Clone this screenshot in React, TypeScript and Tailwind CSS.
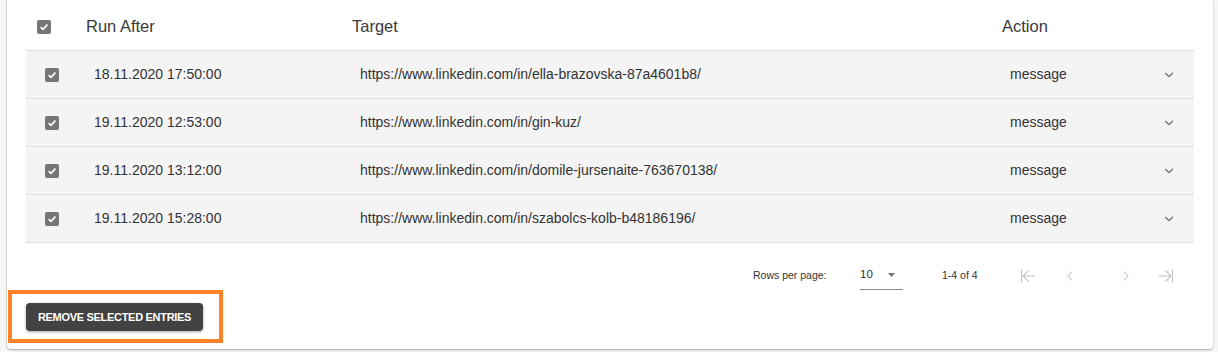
import React from "react";

const rows = [
  { date: "18.11.2020 17:50:00", url: "https://www.linkedin.com/in/ella-brazovska-87a4601b8/" },
  { date: "19.11.2020 12:53:00", url: "https://www.linkedin.com/in/gin-kuz/" },
  { date: "19.11.2020 13:12:00", url: "https://www.linkedin.com/in/domile-jursenaite-763670138/" },
  { date: "19.11.2020 15:28:00", url: "https://www.linkedin.com/in/szabolcs-kolb-b48186196/" },
];

function Check() {
  return (
    <span className="flex h-[14px] w-[14px] items-center justify-center rounded-[2px] bg-[#757575]">
      <svg width="10" height="10" viewBox="0 0 10 10">
        <path d="M1.6 5.2 L4 7.4 L8.4 2.6" fill="none" stroke="#fff" strokeWidth="1.6" />
      </svg>
    </span>
  );
}

function Chevron() {
  return (
    <svg width="10" height="6" viewBox="0 0 10 6">
      <path d="M1 1 L5 4.6 L9 1" fill="none" stroke="#757575" strokeWidth="1.3" />
    </svg>
  );
}

export default function App() {
  return (
    <div className="h-[352px] w-[1218px] bg-[#f5f5f5] font-['Liberation_Sans',Arial,sans-serif]">
      <div className="ml-[7px] h-[349px] w-[1206px] rounded-b-[4px] bg-white shadow-[0_1px_2px_rgba(0,0,0,0.3),-1px_0_1px_rgba(0,0,0,0.06)]">
        <div className="px-[19px]">
          {/* header */}
          <div className="flex h-[51px] items-center border-b border-[#e0e0e0] pt-[3px] text-[16.5px] text-[#3a3a3a]">
            <div className="w-[60px] pl-[11px]">
              <Check />
            </div>
            <div className="w-[266px]">Run After</div>
            <div className="w-[650px]">Target</div>
            <div>Action</div>
          </div>

          {/* rows */}
          {rows.map((r) => (
            <div
              key={r.date}
              className="flex h-[48px] items-center border-b border-[#e0e0e0] bg-[#f4f4f4] pl-[8px] text-[14px] text-[#333]"
            >
              <div className="w-[60px] pl-[11px]">
                <Check />
              </div>
              <div className="w-[266px]">{r.date}</div>
              <div className="w-[650px]">{r.url}</div>
              <div className="flex flex-1 items-center justify-between pr-[20px]">
                <span>message</span>
                <Chevron />
              </div>
            </div>
          ))}

          {/* pagination */}
          <div className="flex h-[47px] items-center pt-[18px] text-[10.5px] text-[#333]">
            <span className="ml-[727px] w-[107px]">Rows per page:</span>
            <div className="flex h-[28px] w-[43px] items-center border-b border-[#888]">
              <span className="text-[11.5px]">10</span>
              <svg className="ml-[15px]" width="7" height="4" viewBox="0 0 7 4">
                <path d="M0 0 H7 L3.5 4 Z" fill="#757575" />
              </svg>
            </div>
            <span className="ml-[39px] w-[78px] text-[10.5px]">1-4 of 4</span>
            <div className="flex items-center">
              <svg width="16" height="16" viewBox="0 0 16 16" className="mr-[30px]">
                <path d="M1.5 1.5 V14.5 M15 8 H3 M8.5 2.5 L3 8 L8.5 13.5" fill="none" stroke="#c4c4c4" strokeWidth="1.1" />
              </svg>
              <svg width="8" height="12" viewBox="0 0 8 12" className="mr-[48px]">
                <path d="M6 1.5 L2 6 L6 10.5" fill="none" stroke="#c4c4c4" strokeWidth="1.1" />
              </svg>
              <svg width="8" height="12" viewBox="0 0 8 12" className="mr-[28px]">
                <path d="M2 1.5 L6 6 L2 10.5" fill="none" stroke="#c4c4c4" strokeWidth="1.1" />
              </svg>
              <svg width="16" height="16" viewBox="0 0 16 16">
                <path d="M14.5 1.5 V14.5 M1 8 H13 M7.5 2.5 L13 8 L7.5 13.5" fill="none" stroke="#c4c4c4" strokeWidth="1.1" />
              </svg>
            </div>
          </div>
        </div>

        {/* action */}
        <div className="ml-[1px] h-[53px] w-[215px] border-[4px] border-[#ff8128] pl-[14px] pt-[9px]">
          <button className="flex h-[28px] w-[177px] items-center justify-center rounded-[4px] bg-[#424242] text-[11px] font-bold tracking-[-0.3px] text-white shadow-[0_1px_3px_rgba(0,0,0,0.35)]">
            REMOVE SELECTED ENTRIES
          </button>
        </div>
      </div>
    </div>
  );
}
